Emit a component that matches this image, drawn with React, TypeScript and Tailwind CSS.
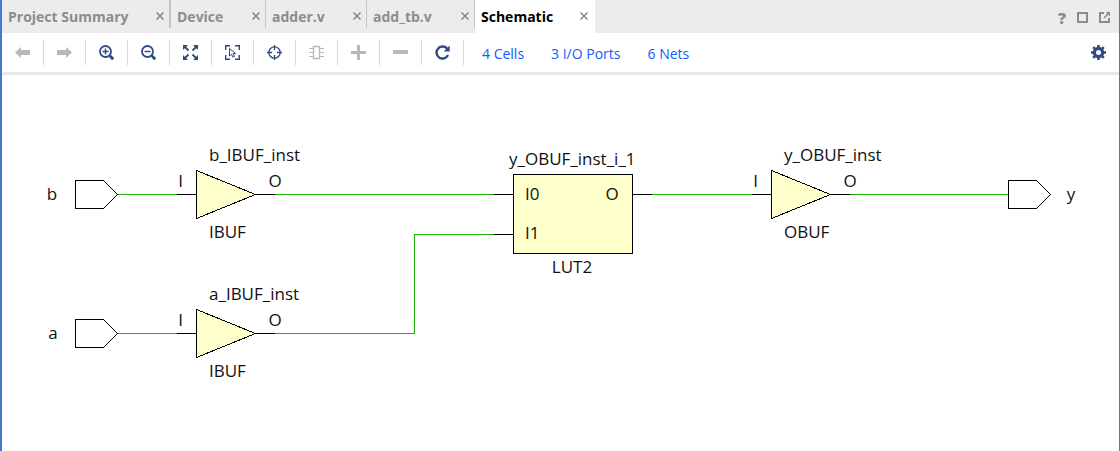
import type { ReactNode } from "react";

type Tab = { label: string; active?: boolean; className: string };

const tabs: Tab[] = [
  { label: "Project Summary", className: "w-[169px] pl-1.5" },
  { label: "Device", className: "w-[95px] pl-1.5" },
  { label: "adder.v", className: "w-[101px] pl-1.5" },
  { label: "add_tb.v", className: "w-[108px] pl-1.5" },
  { label: "Schematic", className: "w-[120px] pl-1.5", active: true },
];

function Icon({ children, className = "text-[#2f4b84]" }: { children: ReactNode; className?: string }) {
  return (
    <svg width="15" height="15" viewBox="0 0 15 15" fill="none" stroke="currentColor" className={className} aria-hidden="true">
      {children}
    </svg>
  );
}

const tools: { label: string; disabled?: boolean; icon: ReactNode }[] = [
  {
    label: "Previous",
    disabled: true,
    icon: <path d="M0 7.5 6 2v3h9v5H6v3z" fill="currentColor" stroke="none" />,
  },
  {
    label: "Next",
    disabled: true,
    icon: <path d="M15 7.5 9 2v3H0v5h9v3z" fill="currentColor" stroke="none" />,
  },
  {
    label: "Zoom In",
    icon: (
      <>
        <circle cx="6.5" cy="6.5" r="5.5" strokeWidth="1.8" />
        <path d="M6.5 3.5v6M3.5 6.5h6" strokeWidth="1.4" />
        <path d="m10.8 10.8 3.4 3.4" strokeWidth="3" />
      </>
    ),
  },
  {
    label: "Zoom Out",
    icon: (
      <>
        <circle cx="6.5" cy="6.5" r="5.5" strokeWidth="1.8" />
        <path d="M3.5 6.5h6" strokeWidth="1.4" />
        <path d="m10.8 10.8 3.4 3.4" strokeWidth="3" />
      </>
    ),
  },
  {
    label: "Zoom Fit",
    icon: (
      <>
        <path d="M0 0h5L0 5zM15 0v5l-5-5zM0 15v-5l5 5zM15 15h-5l5-5z" fill="currentColor" stroke="none" />
        <path d="m2 2 3.5 3.5M13 2 9.5 5.5M2 13l3.5-3.5M13 13 9.5 9.5" strokeWidth="1.8" />
      </>
    ),
  },
  {
    label: "Select Area",
    icon: (
      <>
        <path d="M.7 5V.7H5M10 .7h4.3V5M.7 10v4.3H5M14.3 10v4.3H10" strokeWidth="1.4" />
        <path d="M4.5 3.5V11l2-1.7 1.5 3 1.5-.8L8 8.7l2.7-.2z" />
      </>
    ),
  },
  {
    label: "Auto Fit Selection",
    icon: (
      <>
        <circle cx="7.5" cy="7.5" r="5.7" strokeWidth="1.3" />
        <path d="M7.5 0v5M7.5 10v5M0 7.5h5M10 7.5h5" strokeWidth="1.3" />
      </>
    ),
  },
  {
    label: "Expand Cell",
    disabled: true,
    icon: (
      <>
        <path d="M4.5 1.5h6v12h-6z" strokeWidth="1.4" />
        <path d="M0 3.5h4M0 7.5h4M0 11.5h4M11 3.5h4M11 7.5h4M11 11.5h4" />
      </>
    ),
  },
  { label: "Expand", disabled: true, icon: <path d="M7.5 0v15M0 7.5h15" strokeWidth="3" /> },
  { label: "Collapse", disabled: true, icon: <path d="M0 7h15" strokeWidth="4" /> },
  {
    label: "Regenerate",
    icon: (
      <>
        <path d="M12.4 4A6 6 0 1 0 13 10" strokeWidth="2.4" />
        <path d="M14.7.5v6h-6z" fill="currentColor" stroke="none" />
      </>
    ),
  },
];

function InputPort({ y }: { y: number }) {
  return <path d={`M75.5 ${y - 14}h28l14 14l-14 14h-28z`} fill="#fff" stroke="#000" />;
}

function Buffer({ x, y, name, type }: { x: number; y: number; name: string; type: string }) {
  return (
    <g>
      <path d={`M${x - 19.5} ${y}H${x}M${x + 59} ${y}h19.5`} stroke="#000" shapeRendering="crispEdges" />
      <path d={`M${x} ${y - 24}v48l59-24z`} fill="#ffffcc" stroke="#000" shapeRendering="crispEdges" />
      <text x={x + 12.5} y={y - 33.5}>{name}</text>
      <text x={x + 12.5} y={y + 43.5}>{type}</text>
      <text x={x - 16} y={y - 7.5} textAnchor="middle">I</text>
      <text x={x + 78.5} y={y - 7.5} textAnchor="middle">O</text>
    </g>
  );
}

function Schematic() {
  return (
    <svg
      width="1090"
      height="365"
      viewBox="2 75 1090 365"
      className="block shrink-0 font-['Open_Sans','Noto_Sans',sans-serif] text-[17px]"
      role="img"
      aria-label="Schematic"
    >
      <g fill="none" stroke="#1cb000" shapeRendering="crispEdges">
        <path d="M118 194.5H178M275 194.5H495M652 194.5H753M850 194.5H1009" />
        <path d="M118 333.5H178M275 333.5H414.5V234.5H495" />
      </g>
      <g shapeRendering="crispEdges">
        <InputPort y={194.5} />
        <InputPort y={333.5} />
        <path d="M1008.5 180.5h28l14 14l-14 14h-28z" fill="#fff" stroke="#000" />
        <path d="M494 194.5H513M494 234.5H513M633 194.5H652" stroke="#000" />
        <rect x="513.5" y="174.5" width="119" height="79" fill="#ffffcc" stroke="#000" />
      </g>
      <g fill="#111">
        <Buffer x={196.5} y={194.5} name="b_IBUF_inst" type="IBUF" />
        <Buffer x={196.5} y={333.5} name="a_IBUF_inst" type="IBUF" />
        <Buffer x={771.5} y={194.5} name="y_OBUF_inst" type="OBUF" />
        <text x="52" y="200" textAnchor="middle">b</text>
        <text x="53" y="339" textAnchor="middle">a</text>
        <text x="1071" y="200" textAnchor="middle">y</text>
        <text x="509" y="165">y_OBUF_inst_i_1</text>
        <text x="525" y="200">I0</text>
        <text x="525" y="239">I1</text>
        <text x="612" y="200" textAnchor="middle">O</text>
        <text x="572" y="273" textAnchor="middle">LUT2</text>
      </g>
    </svg>
  );
}

export default function App() {
  return (
    <div className="flex min-h-screen flex-col border-r border-l-2 border-[#4678cd] bg-white font-['Open_Sans','Noto_Sans',sans-serif]">
      <header className="flex h-[33px] items-stretch bg-[#ececec]">
        <div className="flex" role="tablist">
          {tabs.map((tab, i) => (
            <div key={tab.label} className={`flex shrink-0 ${tab.active ? "bg-white" : ""} ${tab.className}`}>
              <button
                role="tab"
                aria-selected={!!tab.active}
                className={`h-8 text-left text-[14px] font-bold whitespace-nowrap ${tab.active ? "text-black" : "text-[#8c8c8c]"}`}
              >
                {tab.label}
              </button>
              <button aria-label={`Close ${tab.label}`} className={`ml-auto h-8 text-[#808080] ${tab.active ? "pr-[7px]" : "pr-[5px]"}`}>
                <svg width="8" height="8" viewBox="0 0 8 8" stroke="currentColor" strokeWidth="1.4" aria-hidden="true">
                  <path d="m.5.5 7 7m0-7-7 7" />
                </svg>
              </button>
              {!tab.active && <span className={`h-7 bg-[#c4c4c4] ${i === 0 ? "w-0.5" : "w-px"}`} />}
            </div>
          ))}
        </div>
        <div className="ml-auto flex items-center gap-[11px] pt-0.5 pr-[9px] text-[#8c8c8c]">
          <button aria-label="Help" className="text-[16px] leading-4 font-extrabold">?</button>
          <button aria-label="Maximize">
            <svg width="11" height="11" viewBox="0 0 11 11" fill="none" stroke="currentColor" strokeWidth="2" aria-hidden="true">
              <path d="M1 1h9v9H1z" />
            </svg>
          </button>
          <button aria-label="Float">
            <svg width="11" height="11" viewBox="0 0 11 11" fill="none" stroke="currentColor" strokeWidth="2" aria-hidden="true">
              <path d="M5 1H1v9h9V6" />
              <path d="M5 6 9 2" strokeWidth="1.6" />
              <path d="M6.5 0H11v4.5z" fill="currentColor" stroke="none" />
            </svg>
          </button>
        </div>
      </header>

      <div className="flex h-[42px] items-center border-b-3 border-[#e8e8e8]" role="toolbar">
        {tools.map((tool) => (
          <button
            key={tool.label}
            aria-label={tool.label}
            disabled={tool.disabled}
            className="flex h-[25px] w-[42px] shrink-0 items-center justify-center border-r border-[#d9d9d9]"
          >
            <Icon className={tool.disabled ? "text-[#b8b8b8]" : "text-[#2f4b84]"}>{tool.icon}</Icon>
          </button>
        ))}
        <nav className="flex gap-[27px] pt-0.5 pl-[18px] text-[14px] whitespace-nowrap text-[#0f5cff]">
          <a href="#cells">4 Cells</a>
          <a href="#ports">3 I/O Ports</a>
          <a href="#nets">6 Nets</a>
        </nav>
        <button aria-label="Settings" className="mr-[13px] ml-auto">
          <Icon>
            <circle cx="7.5" cy="7.5" r="4.1" strokeWidth="3.2" />
            <path
              d="M7.5 0v3M7.5 12v3M0 7.5h3M12 7.5h3M2.2 2.2l2 2M10.8 10.8l2 2M2.2 12.8l2-2M10.8 4.2l2-2"
              strokeWidth="2.6"
            />
          </Icon>
        </button>
      </div>

      <main className="flex-1 overflow-x-auto overflow-y-hidden">
        <Schematic />
      </main>
    </div>
  );
}
